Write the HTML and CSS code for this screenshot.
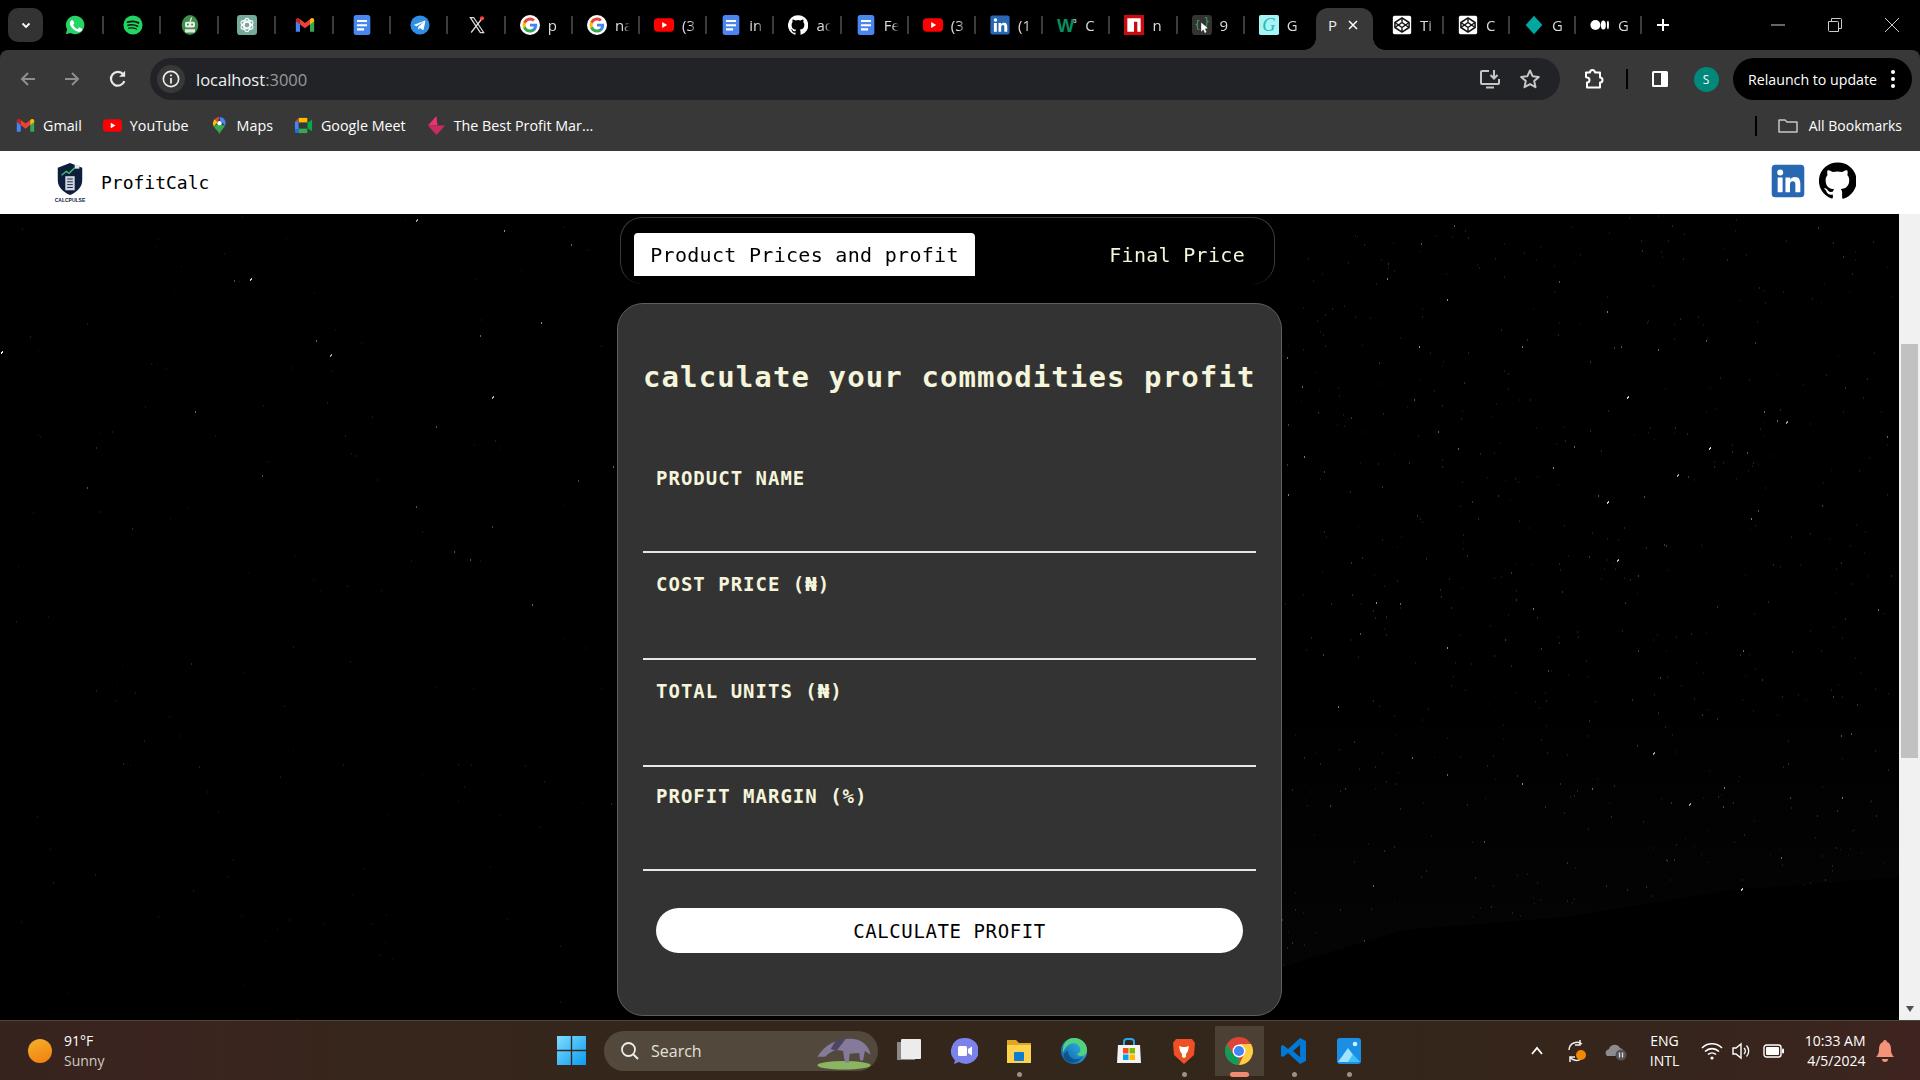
FILE: index.html
```html
<!DOCTYPE html>
<html lang="en">
<head>
    <meta charset="UTF-8">
    <title>ProfitCalc</title>
    <link rel="stylesheet" href="styles.css">
</head>
<body>
<svg class="sprite" width="0" height="0">
    <symbol id="i-whatsapp" viewBox="0 0 24 24"><path fill="#25d366" d="M12 1a11 11 0 0 0-9.500 16.500L1 23l5.700-1.500A11 11 0 1 0 12 1z"/><path fill="#fff" d="M8.300 6.300c-.3 0-.8.100-1.200.6-.5.6-1.300 1.500-1.300 3.200s1.300 3.500 1.500 3.700c.2.300 2.600 4 6.300 5.400 3.100 1.200 3.700 1 4.400.9.700-.1 2.100-.9 2.400-1.700.3-.8.300-1.600.2-1.700-.1-.2-.3-.3-.7-.5l-2.400-1.200c-.3-.1-.6-.2-.8.200l-1.100 1.400c-.2.200-.4.300-.8.100-.4-.2-1.500-.6-2.900-1.800-1.100-1-1.800-2.200-2-2.500-.2-.4 0-.6.200-.8l.6-.7c.2-.2.200-.4.400-.6.100-.3 0-.5 0-.7L9.700 7c-.3-.6-.5-.7-.8-.7z"/></symbol>
    <symbol id="i-spotify" viewBox="0 0 24 24"><circle cx="12" cy="12" r="11.500" fill="#1ed760"/><path fill="none" stroke="#111" stroke-width="2.200" stroke-linecap="round" d="M5.500 8.500c4.500-1.300 9.500-1 13 1"/><path fill="none" stroke="#111" stroke-width="1.900" stroke-linecap="round" d="M6 12.300c4-1 8-.7 11.500 1.200"/><path fill="none" stroke="#111" stroke-width="1.600" stroke-linecap="round" d="M6.800 15.800c3.300-.8 6.500-.5 9.300 1"/></symbol>
    <symbol id="i-bot" viewBox="0 0 24 24"><ellipse cx="12" cy="12" rx="10" ry="12" fill="#3f8f4c"/><rect x="6" y="8" width="12" height="7" rx="2" fill="#e8f0e8"/><circle cx="9.500" cy="11.500" r="1.200" fill="#3f8f4c"/><circle cx="14.500" cy="11.500" r="1.200" fill="#3f8f4c"/><rect x="6" y="17" width="12" height="4" fill="#dfe8df"/><path stroke="#e8f0e8" stroke-width="1.500" d="M12 8l2-5"/></symbol>
    <symbol id="i-gpt" viewBox="0 0 24 24"><rect width="24" height="24" rx="4" fill="#74aa9c"/><g fill="none" stroke="#fff" stroke-width="1.300"><circle cx="12" cy="12" r="3.500"/><ellipse cx="12" cy="12" rx="8" ry="4" transform="rotate(30 12 12)"/><ellipse cx="12" cy="12" rx="8" ry="4" transform="rotate(-30 12 12)"/><ellipse cx="12" cy="12" rx="8" ry="4" transform="rotate(90 12 12)"/></g></symbol>
    <symbol id="i-gmail" viewBox="0 0 24 24"><path fill="#4285f4" d="M1 20V7l5 3.500V20z"/><path fill="#34a853" d="M18 20V10.500L23 7v13z"/><path fill="#ea4335" d="M6 11.500V5l6 4.500L18 5v6.500l-6 4.500z"/><path fill="#c5221f" d="M1 7.500V6c0-2 2.300-3 3.800-1.800L6 5v6.500z"/><path fill="#fbbc04" d="M18 5l1.200-.8C20.700 3 23 4 23 6v1.500l-5 4z"/></symbol>
    <symbol id="i-docs" viewBox="0 0 24 24"><rect x="2" width="20" height="24" rx="3" fill="#4a86f0"/><path fill="#fff" d="M6 6h12v2.500H6zM6 11h12v2.500H6zM6 16h8.500v2.500H6z"/></symbol>
    <symbol id="i-telegram" viewBox="0 0 24 24"><circle cx="12" cy="12" r="11.500" fill="#2f8fe6"/><path fill="#fff" d="M5 11.800l12.500-5c.6-.2 1.100.1.900 1L16.300 17.500c-.1.700-.6.800-1.100.5l-3.200-2.300-1.600 1.500c-.2.200-.4.300-.7.300l.3-3.300 6-5.400c.3-.2 0-.4-.4-.1l-7.400 4.700-3.100-1c-.7-.2-.7-.7-.1-.6z"/></symbol>
    <symbol id="i-x" viewBox="0 0 24 24"><path fill="none" stroke="#ddd" stroke-width="1.500" d="M4 3h4l12 18h-4zM19 3L5 21"/><circle cx="18" cy="4" r="2.500" fill="#f44"/></symbol>
    <symbol id="i-google" viewBox="0 0 24 24"><circle cx="12" cy="12" r="12" fill="#fff"/><path fill="#4285f4" d="M20.600 12.200c0-.6-.1-1.200-.2-1.800H12v3.500h4.800a4.100 4.100 0 0 1-1.800 2.700v2.200h2.900c1.700-1.600 2.700-3.900 2.700-6.600z"/><path fill="#34a853" d="M12 21c2.400 0 4.500-.8 5.900-2.200L15 16.600c-.8.500-1.800.9-3 .9-2.300 0-4.300-1.600-5-3.700H4v2.300A9 9 0 0 0 12 21z"/><path fill="#fbbc04" d="M7 13.800a5.400 5.400 0 0 1 0-3.500V8H4a9 9 0 0 0 0 8.100z"/><path fill="#ea4335" d="M12 6.600c1.300 0 2.500.5 3.400 1.300L18 5.400A9 9 0 0 0 4 8l3 2.300c.7-2.100 2.700-3.700 5-3.700z"/></symbol>
    <symbol id="i-yt" viewBox="0 0 24 24"><rect y="4" width="24" height="16" rx="4.500" fill="#f00"/><path fill="#fff" d="M9.800 8.500v7l6-3.500z"/></symbol>
    <symbol id="i-github" viewBox="0 0 24 24"><path fill="currentColor" d="M12 .3a12 12 0 0 0-3.800 23.400c.6.100.8-.3.800-.6v-2c-3.300.7-4-1.600-4-1.600-.5-1.400-1.300-1.800-1.300-1.800-1-.7.100-.7.100-.7 1.200.1 1.800 1.200 1.800 1.200 1 1.800 2.800 1.300 3.500 1 .1-.8.400-1.300.7-1.600-2.700-.3-5.500-1.300-5.500-6 0-1.200.5-2.300 1.300-3.100-.2-.4-.6-1.600 0-3.200 0 0 1-.3 3.400 1.200a11.500 11.500 0 0 1 6 0c2.300-1.500 3.300-1.200 3.300-1.200.6 1.600.2 2.800 0 3.200.9.800 1.300 1.900 1.300 3.200 0 4.600-2.800 5.600-5.500 5.900.5.400.9 1.200.9 2.300v3.300c0 .3.100.7.800.6A12 12 0 0 0 12 .3"/></symbol>
    <symbol id="i-linkedin" viewBox="0 0 24 24"><rect x=".5" y=".5" width="23" height="23" rx="2.500" fill="#2867b2"/><circle cx="6.500" cy="6" r="2.100" fill="#fff"/><path fill="#fff" d="M4.700 9.500h3.500V20H4.700zM10.200 9.500h3.300V11c.6-1 1.800-1.800 3.400-1.800 3 0 3.800 2 3.800 4.800v6h-3.500v-5.300c0-1.300-.2-2.600-1.800-2.600s-2 1.200-2 2.500V20h-3.200z"/></symbol>
    <symbol id="i-w3" viewBox="0 0 24 24"><text x="0" y="20" font-family="'Liberation Sans',sans-serif" font-weight="700" font-size="22" fill="#04905f">W</text><text x="19.500" y="9" font-family="'Liberation Sans',sans-serif" font-weight="700" font-size="7" fill="#ccc">3</text></symbol>
    <symbol id="i-npm" viewBox="0 0 24 24"><rect width="24" height="24" fill="#cb0a0f"/><path fill="#fff" d="M4 4h16v16h-4V8h-4v12H4z"/></symbol>
    <symbol id="i-dark" viewBox="0 0 24 24"><rect width="24" height="24" rx="4" fill="#333"/><text x="3" y="16" font-family="'DejaVu Sans Mono',monospace" font-size="12" fill="#3fa66b">{</text><text x="14" y="12" font-family="'DejaVu Sans Mono',monospace" font-size="12" fill="#3fa66b">}</text><path fill="#fff" d="M11 9l8 7-3.500.5 2 4-2 1-2-4L11 20z"/></symbol>
    <symbol id="i-gfont" viewBox="0 0 24 24"><rect width="24" height="24" rx="2" fill="#a4f5f3"/><text x="4" y="19" font-family="'Liberation Serif',serif" font-style="italic" font-size="22" fill="#2fb3b5">G</text></symbol>
    <symbol id="i-codepen" viewBox="0 0 24 24"><rect x="1" y="1" width="22" height="22" rx="2" fill="#fff"/><g fill="none" stroke="#111" stroke-width="1.800" stroke-linejoin="round"><path d="M12 3.500l8.500 5.500v6L12 20.500 3.500 15V9z"/><path d="M12 3.500V8M12 16v4.500M3.500 9l8.500 6 8.500-6M3.500 15l8.500-6 8.500 6"/></g></symbol>
    <symbol id="i-diamond" viewBox="0 0 24 24"><path fill="#00a8a0" d="M12 1l10 11-10 11L2 12z"/></symbol>
    <symbol id="i-medium" viewBox="0 0 24 24"><circle cx="6.500" cy="12" r="6" fill="#fff"/><ellipse cx="16" cy="12" rx="3" ry="5.500" fill="#fff"/><ellipse cx="21.500" cy="12" rx="1.200" ry="5" fill="#fff"/></symbol>
</svg>

<div class="tabstrip">
    <button class="tab-menu"><svg viewBox="0 0 12 12" width="12" height="12"><path d="M2.500 4.500L6 8l3.500-3.500" fill="none" stroke="#fff" stroke-width="1.800"/></svg></button>
    <div class="tab pinned"><svg class="fav"><use href="#i-whatsapp"/></svg></div>
    <div class="tab pinned"><svg class="fav"><use href="#i-spotify"/></svg></div>
    <div class="tab pinned"><svg class="fav"><use href="#i-bot"/></svg></div>
    <div class="tab pinned"><svg class="fav"><use href="#i-gpt"/></svg></div>
    <div class="tab pinned"><svg class="fav"><use href="#i-gmail"/></svg></div>
    <div class="tab pinned"><svg class="fav"><use href="#i-docs"/></svg></div>
    <div class="tab pinned"><svg class="fav"><use href="#i-telegram"/></svg></div>
    <div class="tab pinned"><svg class="fav"><use href="#i-x"/></svg></div>
    <div class="tab"><svg class="fav"><use href="#i-google"/></svg><span>p</span></div>
    <div class="tab"><svg class="fav"><use href="#i-google"/></svg><span>na</span></div>
    <div class="tab"><svg class="fav"><use href="#i-yt"/></svg><span>(3</span></div>
    <div class="tab"><svg class="fav"><use href="#i-docs"/></svg><span>in</span></div>
    <div class="tab"><svg class="fav gh"><use href="#i-github"/></svg><span>ac</span></div>
    <div class="tab"><svg class="fav"><use href="#i-docs"/></svg><span>Fe</span></div>
    <div class="tab"><svg class="fav"><use href="#i-yt"/></svg><span>(3</span></div>
    <div class="tab"><svg class="fav"><use href="#i-linkedin"/></svg><span>(1</span></div>
    <div class="tab"><svg class="fav"><use href="#i-w3"/></svg><span>C</span></div>
    <div class="tab"><svg class="fav"><use href="#i-npm"/></svg><span>n</span></div>
    <div class="tab"><svg class="fav"><use href="#i-dark"/></svg><span>9</span></div>
    <div class="tab last"><svg class="fav"><use href="#i-gfont"/></svg><span>G</span></div>
    <div class="tab active"><span>P</span><svg class="tab-close" viewBox="0 0 12 12"><path d="M2 2l8 8M10 2l-8 8" stroke="#fff" stroke-width="1.500"/></svg></div>
    <div class="tab slim"><svg class="fav"><use href="#i-codepen"/></svg><span>Ti</span></div>
    <div class="tab slim"><svg class="fav"><use href="#i-codepen"/></svg><span>C</span></div>
    <div class="tab slim"><svg class="fav"><use href="#i-diamond"/></svg><span>G</span></div>
    <div class="tab slim"><svg class="fav"><use href="#i-medium"/></svg><span>G</span></div>
    <button class="new-tab"><svg viewBox="0 0 16 16" width="16" height="16"><path d="M8 2v12M2 8h12" stroke="#fff" stroke-width="2"/></svg></button>
    <div class="win-controls">
        <button><svg viewBox="0 0 14 14" width="14" height="14"><path d="M0 7h14" stroke="#ccc"/></svg></button>
        <button><svg viewBox="0 0 14 14" width="14" height="14"><path d="M.5 3.500h9a1 1 0 0 1 1 1v9h-9a1 1 0 0 1-1-1zM3.500 3V.5h9a1 1 0 0 1 1 1v9H11" fill="none" stroke="#ccc"/></svg></button>
        <button><svg viewBox="0 0 14 14" width="14" height="14"><path d="M0 0l14 14M14 0L0 14" stroke="#ccc"/></svg></button>
    </div>
</div>

<div class="toolbar">
    <button class="tool"><svg viewBox="0 0 20 20" width="20" height="20"><path d="M17 10H4M10 4l-6 6 6 6" fill="none" stroke="#8e8e8e" stroke-width="2"/></svg></button>
    <button class="tool"><svg viewBox="0 0 20 20" width="20" height="20"><path d="M3 10h13M10 4l6 6-6 6" fill="none" stroke="#8e8e8e" stroke-width="2"/></svg></button>
    <button class="tool reload"><svg viewBox="0 0 20 20" width="22" height="22"><path d="M15.800 12a6.300 6.300 0 1 1-1-6.200" fill="none" stroke="#e8e8e8" stroke-width="2"/><path d="M16.500 2.500v5.500H11z" fill="#e8e8e8"/></svg></button>
    <div class="omnibox">
        <span class="site-info"><svg viewBox="0 0 20 20" width="18" height="18"><circle cx="10" cy="10" r="8.500" fill="none" stroke="#eee" stroke-width="1.800"/><path d="M10 9v6M10 5v2" stroke="#eee" stroke-width="2"/></svg></span>
        <span class="url">localhost<em>:3000</em></span>
        <button class="tool omni-tool first"><svg viewBox="0 0 22 22" width="22" height="22"><path d="M10 3H3a1 1 0 0 0-1 1v11a1 1 0 0 0 1 1h16a1 1 0 0 0 1-1v-4M7 19.500h8" fill="none" stroke="#c4c7c5" stroke-width="2"/><path d="M15 2v8M11.500 7l3.500 3.500L18.500 7" fill="none" stroke="#c4c7c5" stroke-width="2"/></svg></button>
        <button class="tool omni-tool"><svg viewBox="0 0 22 22" width="22" height="22"><path d="M11 2.500l2.600 5.700 6.200.7-4.600 4.200 1.300 6.100L11 16.100l-5.500 3.100 1.300-6.100-4.600-4.200 6.200-.7z" fill="none" stroke="#c4c7c5" stroke-width="2" stroke-linejoin="round"/></svg></button>
    </div>
    <button class="tool ext"><svg viewBox="0 0 22 22" width="22" height="22"><path d="M8 4.500a2.500 2.500 0 0 1 5 0h5v5a2.500 2.500 0 0 1 0 5v5H5v-5a2.500 2.500 0 0 0 0-5 2.500 2.500 0 0 0-1-.5V4.500z" fill="none" stroke="#fff" stroke-width="2" stroke-linejoin="round"/></svg></button>
    <span class="tool-sep"></span>
    <button class="tool side"><svg viewBox="0 0 20 20" width="20" height="20"><rect x="2" y="2" width="16" height="16" rx="1.500" fill="#fff"/><rect x="4" y="4" width="7" height="12" fill="#383838"/></svg></button>
    <span class="avatar">S</span>
    <div class="relaunch">Relaunch to update<svg viewBox="0 0 4 20" width="4" height="20"><circle cx="2" cy="3" r="2" fill="#fff"/><circle cx="2" cy="10" r="2" fill="#fff"/><circle cx="2" cy="17" r="2" fill="#fff"/></svg></div>
</div>

<div class="bookmarks">
    <span class="mark"><svg class="mark-icon"><use href="#i-gmail"/></svg>Gmail</span>
    <span class="mark"><svg class="mark-icon"><use href="#i-yt"/></svg>YouTube</span>
    <span class="mark"><svg class="mark-icon" viewBox="0 0 20 20"><path fill="#ea4335" d="M10 1a6.500 6.500 0 0 0-5 2.300l3 3z"/><path fill="#4285f4" d="M10 1c3.500 0 6.500 2.900 6.500 6.500 0 1-.2 1.800-.6 2.600L11 5.500z"/><path fill="#fbbc04" d="M5 3.300A6.500 6.500 0 0 0 4 11l4-4.500z"/><path fill="#34a853" d="M4 11c1.500 3 5 5 6 8 1-3 4-5 5.900-8.900L8 8.500z"/><circle cx="10" cy="7.500" r="2.300" fill="#fff"/></svg>Maps</span>
    <span class="mark"><svg class="mark-icon" viewBox="0 0 20 20"><path fill="#fbbc04" d="M5 2h9v5H5z"/><path fill="#ea4335" d="M5 2L1 6h4z"/><path fill="#4285f4" d="M1 6h4v8H1z"/><path fill="#1a73e8" d="M1 14h4v4H3a2 2 0 0 1-2-2z"/><path fill="#34a853" d="M5 13h9v5H5z"/><path fill="#00ac47" d="M14 7l5-3v12l-5-3z"/><rect x="5" y="7" width="9" height="6" fill="#383838"/></svg>Google Meet</span>
    <span class="mark"><svg class="mark-icon" viewBox="0 0 20 20"><path fill="#e8356f" d="M10 0L1 10h10z"/><path fill="#c72c5e" d="M1 10l9 10 9-10z"/></svg>The Best Profit Mar...</span>
    <span class="mark-sep"></span>
    <svg class="folder" viewBox="0 0 20 16"><path d="M1 14V2h6l2 2h10v10z" fill="none" stroke="#c4c7c5" stroke-width="1.500" stroke-linejoin="round"/></svg>
    <span class="mark all">All Bookmarks</span>
</div>

<nav class="navbar">
    <div class="brand">
        <div class="logo">
            <svg viewBox="0 0 30 34" width="30" height="32"><path fill="#0f1d3d" d="M15 0l13 5v13c0 8-6 13-13 16C8 31 2 26 2 18V5z"/><path d="M6 13l5-4 3 2 6-6" fill="none" stroke="#37c26b" stroke-width="1.500"/><rect x="20" y="2" width="5" height="4" fill="#dfe6ee"/><rect x="10" y="14" width="10" height="15" fill="#cfd6df"/><path d="M12 17h6M12 20h6M12 23h6M12 26h6" stroke="#0f1d3d"/></svg>
            <span>CALCPULSE</span>
        </div>
        <span class="brand-name">ProfitCalc</span>
    </div>
    <div class="social">
        <svg class="social-in"><use href="#i-linkedin"/></svg>
        <svg class="social-gh"><use href="#i-github"/></svg>
    </div>
</nav>

<div class="viewport">
    <main class="page">
        <canvas id="stars" class="stars" width="1899" height="806"></canvas>
        <div class="mode-tabs">
            <button class="mode current">Product Prices and profit</button>
            <button class="mode">Final Price</button>
        </div>
        <form class="card" onsubmit="return false">
            <h1>calculate your commodities profit</h1>
            <div class="field"><label for="product">PRODUCT NAME</label><input id="product" type="text"></div>
            <div class="field"><label for="cost">COST PRICE (₦)</label><input id="cost" type="text"></div>
            <div class="field"><label for="units">TOTAL UNITS (₦)</label><input id="units" type="text"></div>
            <div class="field"><label for="margin">PROFIT MARGIN (%)</label><input id="margin" type="text"></div>
            <button class="calc">CALCULATE PROFIT</button>
        </form>
    </main>
    <div class="scrollbar">
        <div class="thumb"></div>
        <div class="arrow"></div>
    </div>
</div>

<footer class="taskbar">
    <div class="weather">
        <span class="sun"></span>
        <div class="two-line"><span>91°F</span><span class="dim">Sunny</span></div>
    </div>
    <svg class="win-logo" viewBox="0 0 30 30"><defs><linearGradient id="win" x1="0" y1="0" x2="1" y2="1"><stop offset="0" stop-color="#7fdcff"/><stop offset="1" stop-color="#0b9bf0"/></linearGradient></defs><path fill="url(#win)" d="M0 0h14.300v14.300H0zM15.700 0H30v14.300H15.700zM0 15.700h14.300V30H0zM15.700 15.700H30V30H15.700z"/></svg>
    <div class="search">
        <svg viewBox="0 0 20 20" width="20" height="20"><circle cx="8.500" cy="8.500" r="6.500" fill="none" stroke="#eee" stroke-width="1.800"/><path d="M13.500 13.500L18 18" stroke="#eee" stroke-width="2"/></svg>
        <span>Search</span>
        <svg class="anteater" viewBox="0 0 60 40" width="58" height="38"><ellipse cx="30" cy="35" rx="28" ry="4.500" fill="#8cb562"/><path fill="#857a99" d="M2 26C10 13 22 7 36 7c12 0 20 6 22 17l-6-4-2 10h-3l-1-8-10 1-1 9h-4l-2-12c-6-2-12-1-19 6z"/><path fill="#4b4763" d="M22 8l10-1-10 13-6-2z"/></svg>
    </div>
    <div class="apps">
        <div class="app"><svg viewBox="0 0 28 28" width="28" height="28"><rect x="2" y="5" width="18" height="18" fill="#8a8a8a"/><rect x="6" y="2" width="20" height="20" rx="1" fill="#ececec"/></svg></div>
        <div class="app"><svg viewBox="0 0 28 28" width="28" height="28"><path fill="#7b83eb" d="M14 1a13 13 0 0 0-9 22.300L4 27l5-2a13 13 0 1 0 5-24z"/><rect x="8" y="9" width="9" height="10" rx="1.500" fill="#fff"/><path fill="#fff" d="M18 12l4-2.500v9L18 16z"/></svg></div>
        <div class="app has-run"><svg viewBox="0 0 28 28" width="28" height="28"><path fill="#e0a526" d="M2 3h9l3 3h12v3H2z"/><path fill="#ffd24d" d="M2 8h24v18H2z"/><rect x="9" y="15" width="10" height="9" rx="1" fill="#0f7bd1"/></svg></div>
        <div class="app"><svg viewBox="0 0 28 28" width="28" height="28"><defs><linearGradient id="edge" x1="0" y1="1" x2="1" y2="0"><stop offset="0" stop-color="#0c59a4"/><stop offset="1" stop-color="#35c1f1"/></linearGradient></defs><circle cx="14" cy="14" r="13" fill="url(#edge)"/><path fill="#52d17c" d="M14 1c8 0 13 6 13 12 0 4-3 6-6 6-2 0-4-1-4-2 3-1 4-3 3-6-1-4-6-6-10-4C6 9 4 13 3 16 2 8 6 1 14 1z"/><path fill="#0c3a6e" d="M8 14c0 5 4 9 9 8 2 0 4-1 6-3-3 6-11 9-17 4-3-3-3-8 2-9z" opacity=".6"/></svg></div>
        <div class="app"><svg viewBox="0 0 28 28" width="28" height="28"><path d="M9 8V5a3 3 0 0 1 3-3h4a3 3 0 0 1 3 3v3" fill="none" stroke="#2ba5e8" stroke-width="2"/><path fill="#f3f3f3" d="M3 8h22l1 18H2z"/><rect x="8" y="11" width="5.500" height="5.500" fill="#f25022"/><rect x="14.500" y="11" width="5.500" height="5.500" fill="#7fba00"/><rect x="8" y="17.500" width="5.500" height="5.500" fill="#00a4ef"/><rect x="14.500" y="17.500" width="5.500" height="5.500" fill="#ffb900"/></svg></div>
        <div class="app has-run"><svg viewBox="0 0 28 28" width="28" height="28"><path fill="#f04e23" d="M6 2h16l3 4-1 12-10 9-10-9L3 6z"/><path fill="#fff" d="M9 9l3 1h4l3-1-1 5-2 3v3l-2 1-2-1v-3l-2-3z"/></svg></div>
        <div class="app chrome-app"><svg viewBox="0 0 28 28" width="30" height="30"><circle cx="14" cy="14" r="13" fill="#db4437"/><path fill="#0f9d58" d="M14 27A13 13 0 0 1 2.700 7.500L9 18l5 1z"/><path fill="#ffcd40" d="M14 27A13 13 0 0 0 25.300 7.500H14l5 3-1 8z"/><circle cx="14" cy="14" r="6" fill="#fff"/><circle cx="14" cy="14" r="4.700" fill="#4285f4"/></svg></div>
        <div class="app has-run"><svg viewBox="0 0 28 28" width="28" height="28"><path fill="#0078d4" d="M20 1l6 3v20l-6 3-12-11-5 4-2-1V9l2-1 5 4zM20 8l-7 6 7 6z"/></svg></div>
        <div class="app has-run"><svg viewBox="0 0 28 28" width="28" height="28"><rect x="2" y="1" width="24" height="26" rx="3" fill="#1a8fe3"/><circle cx="20" cy="7" r="2.300" fill="#cfefff"/><path fill="#9fe3ff" d="M3 25l10-14 6 8-5 6z"/><path fill="#3ec1f5" d="M13 25l5-8 7 8z"/></svg></div>
    </div>
    <div class="tray">
        <svg class="tray-icon chevron" viewBox="0 0 14 14" width="14" height="14"><path d="M2 10l5-6 5 6" fill="none" stroke="#fff" stroke-width="1.800"/></svg>
        <svg class="tray-icon sync" viewBox="0 0 24 24" width="24" height="24"><path d="M4 11a8 8 0 0 1 13-6M16 20a8 8 0 0 1-11-2" fill="none" stroke="#eee" stroke-width="1.500"/><path d="M15 1v5h-5M5 23v-5h5" fill="none" stroke="#eee" stroke-width="1.500"/><circle cx="16" cy="16" r="5" fill="#f28a00"/></svg>
        <svg class="tray-icon cloud" viewBox="0 0 24 24" width="24" height="24"><path fill="#8c8c8c" d="M3 17a4 4 0 0 1 2-7 6 6 0 0 1 11-1 5 5 0 0 1 3 8z"/><circle cx="17" cy="16" r="5.500" fill="#555"/><path d="M15.500 13.500v5M18.500 13.500v5" stroke="#ddd" stroke-width="1.300"/></svg>
        <div class="two-line lang"><span>ENG</span><span>INTL</span></div>
        <svg class="tray-icon wifi" viewBox="0 0 22 18" width="22" height="18"><path d="M1 6a14 14 0 0 1 20 0M4 9.500a10 10 0 0 1 14 0M7 12.500a6 6 0 0 1 8 0" fill="none" stroke="#fff" stroke-width="1.600"/><circle cx="11" cy="16" r="1.600" fill="#fff"/></svg>
        <svg class="tray-icon vol" viewBox="0 0 22 18" width="22" height="18"><path d="M2 6h3l5-4v14l-5-4H2z" fill="none" stroke="#fff" stroke-width="1.400"/><path d="M13 6a4 4 0 0 1 0 6M15.500 3.500a8 8 0 0 1 0 11" fill="none" stroke="#fff" stroke-width="1.300"/></svg>
        <svg class="tray-icon batt" viewBox="0 0 22 14" width="22" height="14"><rect x="1" y="1" width="17" height="12" rx="2.500" fill="none" stroke="#fff" stroke-width="1.400"/><rect x="3" y="3" width="13" height="8" rx="1" fill="#fff"/><rect x="19" y="4.500" width="2" height="5" rx="1" fill="#fff"/></svg>
        <div class="two-line clock"><span>10:33 AM</span><span>4/5/2024</span></div>
        <svg class="tray-icon bell" viewBox="0 0 20 24" width="20" height="24"><path fill="#f2937a" d="M10 1a2 2 0 0 1 2 2c3 1 4 4 4 7 0 4 1 6 3 8H1c2-2 3-4 3-8 0-3 1-6 4-7a2 2 0 0 1 2-2z"/><path fill="#f2937a" d="M7 20h6a3 3 0 0 1-6 0z"/></svg>
    </div>
</footer>
<script src="stars.js"></script>
</body>
</html>
```

FILE: styles.css
```css
html, body {
    margin: 0;
    height: 100%;
}

body {
    display: flex;
    flex-direction: column;
    height: 100vh;
    overflow: hidden;
    background: #000;
    font-family: "Open Sans", "Noto Sans", sans-serif;
    color: #fff;
}

button {
    border: none;
    background: none;
    padding: 0;
    color: inherit;
    font: inherit;
}

svg {
    display: block;
}

.sprite {
    position: absolute;
}

/* tab strip */
.tabstrip {
    display: flex;
    flex: 0 0 50px;
    height: 50px;
    padding-left: 8px;
    box-sizing: border-box;
    background: #000;
    font-size: 15px;
}

.tab-menu {
    display: flex;
    align-items: center;
    justify-content: center;
    width: 35px;
    height: 34px;
    margin: 8px 3.6px 0 0;
    border-radius: 10px;
    background: #333;
}

.tab {
    position: relative;
    display: flex;
    align-items: center;
    width: 67.2px;
    height: 42px;
    margin-top: 4px;
    padding-left: 14px;
    box-sizing: border-box;
    flex: none;
    color: #ddd;
}

.tab::after {
    content: "";
    position: absolute;
    right: 0;
    top: 12px;
    width: 2px;
    height: 18px;
    background: #3c3c3c;
}

.tab.pinned {
    width: 57.4px;
    padding-left: 0;
    justify-content: center;
}

.tab.slim {
    width: 66px;
}

.tab.last::after {
    display: none;
}

.fav {
    flex: none;
    width: 20px;
    height: 20px;
}

.fav.gh {
    color: #fff;
}

.tab span {
    width: 15px;
    margin-left: 8px;
    overflow: hidden;
    white-space: nowrap;
    mask-image: linear-gradient(90deg, #000 55%, transparent);
}

.tab.active {
    width: 57px;
    height: 42px;
    margin: 8px 5px 0 4px;
    padding: 0 0 8px 12px;
    background: #383838;
    border-radius: 12px 12px 0 0;
    color: #eee;
}

.tab.active::before,
.tab.active::after {
    content: "";
    display: block;
    position: absolute;
    top: auto;
    bottom: 0;
    width: 12px;
    height: 12px;
}

.tab.active::before {
    left: -12px;
    background: radial-gradient(circle at 0 0, transparent 11.5px, #383838 12px);
}

.tab.active::after {
    right: -12px;
    background: radial-gradient(circle at 100% 0, transparent 11.5px, #383838 12px);
}

.tab.active span {
    width: 19px;
    margin-left: 0;
    mask-image: none;
}

.tab-close {
    width: 12px;
    height: 12px;
    flex: none;
}

.new-tab {
    display: flex;
    align-items: center;
    justify-content: center;
    width: 42px;
    height: 50px;
}

.win-controls {
    display: flex;
    margin-left: auto;
}

.win-controls button {
    display: flex;
    align-items: center;
    justify-content: center;
    width: 57px;
    height: 50px;
}

/* toolbar */
.toolbar {
    display: flex;
    align-items: center;
    flex: 0 0 50px;
    height: 50px;
    padding: 8px 0 0 6px;
    box-sizing: border-box;
    background: #383838;
    border-radius: 8px 8px 0 0;
}

.tool {
    display: flex;
    align-items: center;
    justify-content: center;
    flex: none;
    width: 44px;
    height: 42px;
}

.tool.reload {
    margin-left: 2px;
}

.omnibox {
    display: flex;
    align-items: center;
    width: 1410px;
    height: 42px;
    margin-left: 10px;
    padding: 0 10px 0 7px;
    box-sizing: border-box;
    background: #212327;
    border-radius: 21px;
}

.site-info {
    display: flex;
    align-items: center;
    justify-content: center;
    width: 28px;
    height: 28px;
    border-radius: 50%;
    background: #383838;
}

.url {
    margin-left: 11px;
    font-size: 16.5px;
    color: #f0f0f0;
}

.url em {
    font-style: normal;
    color: #9a9a9a;
}

.omni-tool {
    width: 40px;
}

.omni-tool.first {
    margin-left: auto;
}

.ext {
    width: 40px;
    margin-left: 13px;
}

.tool-sep {
    flex: none;
    width: 2px;
    height: 20px;
    margin-left: 13px;
    background: #000;
}

.side {
    width: 40px;
    margin-left: 12px;
}

.avatar {
    display: flex;
    align-items: center;
    justify-content: center;
    flex: none;
    width: 25px;
    height: 25px;
    margin-left: 13.5px;
    border-radius: 50%;
    background: #00897b;
    font-size: 12px;
}

.relaunch {
    display: flex;
    align-items: center;
    justify-content: space-between;
    width: 179px;
    height: 42px;
    margin-left: 14.5px;
    padding: 0 17px 0 15px;
    box-sizing: border-box;
    border-radius: 21px;
    background: #000;
    font-size: 14.2px;
    white-space: nowrap;
}

/* bookmarks */
.bookmarks {
    display: flex;
    align-items: center;
    gap: 21px;
    flex: 0 0 51px;
    height: 51px;
    padding: 0 18px 0 16px;
    box-sizing: border-box;
    background: #383838;
    font-size: 14.3px;
}

.mark {
    display: flex;
    align-items: center;
    gap: 8px;
    white-space: nowrap;
}

.mark-icon {
    width: 19px;
    height: 19px;
}

.mark-sep {
    width: 2px;
    height: 20px;
    margin-left: auto;
    background: #000;
}

.folder {
    width: 20px;
    height: 16px;
}

.mark.all {
    margin-left: -10px;
    font-size: 14px;
}

/* app navbar */
.navbar {
    display: flex;
    align-items: center;
    justify-content: space-between;
    flex: 0 0 63px;
    height: 63px;
    padding: 0 64px 0 55px;
    box-sizing: border-box;
    background: #fff;
    color: #000;
}

.brand {
    display: flex;
    align-items: center;
    gap: 16px;
}

.logo {
    display: flex;
    flex-direction: column;
    align-items: center;
    width: 30px;
}

.logo span {
    font-family: "Liberation Sans", sans-serif;
    font-size: 5px;
    font-weight: 700;
    color: #0f1d3d;
    white-space: nowrap;
    margin-top: 2px;
}

.brand-name {
    font-family: "DejaVu Sans Mono", monospace;
    font-size: 18px;
    padding-bottom: 1px;
}

.social {
    display: flex;
    align-items: center;
    gap: 14px;
    padding-bottom: 4px;
}

.social-in {
    width: 34px;
    height: 34px;
}

.social-gh {
    width: 37px;
    height: 37px;
    color: #000;
}

/* page */
.viewport {
    display: flex;
    flex: 1;
    min-height: 0;
}

.page {
    position: relative;
    display: flex;
    flex-direction: column;
    align-items: center;
    flex: 1;
    overflow: hidden;
    font-family: "DejaVu Sans Mono", monospace;
}

.stars {
    position: absolute;
    left: 0;
    top: 0;
}

.mode-tabs {
    position: relative;
    display: flex;
    align-items: flex-start;
    justify-content: space-between;
    width: 655px;
    height: 67px;
    margin: 3px 4px 0 0;
    padding: 15px 29px 0 13px;
    box-sizing: border-box;
    border: 1px solid #3a3a3a;
    border-bottom: none;
    border-radius: 22px;
}

.mode {
    height: 43px;
    font-size: 20px;
    letter-spacing: .3px;
    color: #f5f5dc;
}

.mode.current {
    width: 341px;
    background: #fff;
    color: #000;
    border-radius: 4px 4px 0 0;
}

.card {
    position: relative;
    display: flex;
    flex-direction: column;
    width: 665px;
    height: 713px;
    margin-top: 19px;
    padding: 53px 25px 0;
    box-sizing: border-box;
    background: #333;
    border: 1px solid #5e5e5e;
    border-radius: 26px;
    color: #f5f5dc;
}

.card h1 {
    margin: 0 0 49px;
    font-size: 29px;
    letter-spacing: 1.1px;
    line-height: 40px;
    white-space: nowrap;
}

.field {
    display: flex;
    flex-direction: column;
    height: 107px;
    box-sizing: border-box;
    padding-top: 19px;
    border-bottom: 2px solid #e6e6e6;
}

.field:first-of-type {
    padding-top: 20px;
}

.field:nth-of-type(4) {
    height: 104px;
    padding-top: 17px;
}

.field label {
    padding-left: 13px;
    font-size: 19px;
    font-weight: 700;
    letter-spacing: 1px;
    line-height: 24px;
}

.field input {
    flex: 1;
    min-height: 0;
    border: none;
    outline: none;
    background: transparent;
    color: #f5f5dc;
}

.calc {
    height: 45px;
    margin: 37px 13px 0;
    border-radius: 23px;
    background: #fff;
    color: #000;
    font-size: 19px;
    letter-spacing: .6px;
}

.scrollbar {
    display: flex;
    flex-direction: column;
    align-items: center;
    flex: 0 0 21px;
    padding-top: 130px;
    box-sizing: border-box;
    background: #f1f1f1;
}

.thumb {
    width: 17px;
    height: 414px;
    background: #c1c1c1;
}

.arrow {
    margin: auto 0 8px;
    border: 4.5px solid transparent;
    border-top: 6px solid #505050;
    border-bottom: none;
}

/* windows taskbar */
.taskbar {
    display: flex;
    align-items: center;
    flex: 0 0 60px;
    height: 60px;
    box-sizing: border-box;
    border-top: 1px solid #4d4439;
    background: linear-gradient(90deg, #36231d 0, #3b2420 8%, #36261b 20%, #33261a 60%, #36251c 88%, #3e2420 100%);
    font-size: 14.5px;
}

.weather {
    display: flex;
    align-items: center;
    gap: 12px;
    width: 557px;
    padding-left: 28px;
    box-sizing: border-box;
}

.sun {
    width: 24px;
    height: 24px;
    border-radius: 50%;
    background: linear-gradient(160deg, #f2b32a, #f47c10);
}

.two-line {
    display: flex;
    flex-direction: column;
    line-height: 20px;
    font-size: 14px;
}

.dim {
    color: #cfcac4;
}

.win-logo {
    flex: none;
    width: 29px;
    height: 29px;
}

.search {
    display: flex;
    align-items: center;
    gap: 11px;
    width: 274px;
    height: 40px;
    margin-left: 18px;
    padding: 0 5px 0 16px;
    box-sizing: border-box;
    border-radius: 20px;
    background: #52493c;
    font-size: 16px;
    color: #e4e0da;
}

.anteater {
    margin-left: auto;
}

.apps {
    display: flex;
    margin-left: 3.5px;
}

.app {
    position: relative;
    display: flex;
    align-items: center;
    justify-content: center;
    width: 55px;
    height: 59px;
}

.app.has-run::after,
.chrome-app::after {
    content: "";
    position: absolute;
    bottom: 3px;
    left: 25px;
    width: 5px;
    height: 5px;
    border-radius: 50%;
    background: #9a9288;
}

.chrome-app {
    background: linear-gradient(#4a4034, #4a4034) center / 49px 50px no-repeat;
}

.chrome-app::after {
    left: 18px;
    width: 19px;
    height: 5px;
    border-radius: 3px;
    background: #f08a75;
}

.tray {
    display: flex;
    align-items: center;
    flex: 1;
    padding-left: 153px;
    box-sizing: border-box;
}

.tray-icon {
    flex: none;
}

.sync {
    margin-left: 21px;
}

.cloud {
    margin-left: 15px;
}

.lang {
    align-items: center;
    width: 40px;
    margin-left: 17px;
}

.wifi {
    margin-left: 16px;
}

.vol {
    margin-left: 8px;
}

.batt {
    margin-left: 10px;
}

.clock {
    align-items: flex-end;
    width: 68px;
    margin-left: 13px;
}

.bell {
    margin-left: 9px;
}
```

FILE: stars.js
```js
// bright stars picked by hand, faint ones come from a seeded random
const bright = [
    [416,5,.8],[504,16,.7],[250,64,1],[234,66,.4],[571,30,.5],[541,108,.7],[1,137,1.4],[316,126,.5],[330,140,.8],
    [480,121,.5],[492,182,.9],[195,197,.5],[436,212,.4],[613,252,.5],[262,261,.4],[87,273,.4],[416,292,.4],
    [492,312,.3],[454,337,.4],[470,345,.4],[532,390,.5],[578,266,.3],[96,233,.2],[132,314,.2],
    [1627,182,1],[1709,233,1],[1607,287,1],[1677,260,.8],[1617,345,.9],[1786,207,.8],[1777,206,.5],[1764,197,.5],
    [1553,253,.7],[1419,132,.7],[1447,85,.7],[1387,64,.6],[1522,132,.6],[1607,97,.6],[1658,135,.5],[1621,132,.4],
    [1706,126,.4],[1559,67,.4],[1751,304,.6],[1758,296,.4],[1644,282,.4],[1598,281,.4],[1574,232,.5],[1747,238,.4],
    [1887,222,.5],[1438,217,.5],[1458,234,.5],[1414,185,.4],[1304,242,.6],[1288,280,.6],[1302,172,.5],[1287,143,.5],
    [1376,388,.7],[1400,389,.5],[1533,394,.6],[1878,395,.5],[1454,11,.4],[1421,29,.4],[1666,331,.3],[1638,361,.3],
    [1741,674,1],[1653,538,.8],[1689,589,.8],[1724,573,.6],[1522,569,.7],[1447,433,.7],[1338,492,.6],[1842,583,.6],
    [1743,436,.5],[1373,671,.5],[1447,560,.5],[1781,643,.5],[1412,543,.5],[1484,627,.4],[1592,574,.5],[1723,592,.4],
    [1841,521,.4],[1851,519,.4],[1833,482,.3],[1360,419,.4],[1323,440,.3],[1638,436,.3],[1660,463,.3],[1330,591,.3],
    [1364,726,.3]
];

// the planet edge at the bottom right, page coordinates
const rim = [[1000,800],[1282,753],[1402,716],[1566,703],[1729,676],[1899,663]];

const cv = document.getElementById("stars");
const ctx = cv.getContext("2d");

let seed = 4711;
function rnd() {
    seed = (seed * 16807) % 2147483647;
    return seed / 2147483647;
}

function edge(x) {
    for (let i = 1; i < rim.length; i++) {
        if (x <= rim[i][0]) {
            const t = (x - rim[i-1][0]) / (rim[i][0] - rim[i-1][0]);
            return rim[i-1][1] + t * (rim[i][1] - rim[i-1][1]);
        }
    }
    return 806;
}

// faint haze above the edge
ctx.beginPath();
ctx.moveTo(rim[0][0], rim[0][1]);
rim.forEach(p => ctx.lineTo(p[0], p[1]));
ctx.lineTo(1899, 480);
ctx.lineTo(1000, 480);
ctx.closePath();
const haze = ctx.createLinearGradient(0, 480, 0, 780);
haze.addColorStop(0, "rgba(255,255,255,0)");
haze.addColorStop(1, "rgba(255,255,255,.02)");
ctx.fillStyle = haze;
ctx.fill();

function star(x, y, a) {
    ctx.fillStyle = "rgba(235,240,255," + Math.min(a, 1) + ")";
    if (a > .6) {
        // the big ones look slanted in the reference
        ctx.fillRect(x + 1, y, 1, 1);
        ctx.fillRect(x, y + 1, 2, 1);
        ctx.fillRect(x, y + 2, 1, 1);
    } else {
        ctx.fillRect(x, y, 1, 2);
    }
}

for (let i = 0; i < 650; i++) {
    const x = Math.floor(1282 + rnd() * 610);
    const y = Math.floor(rnd() * 806);
    const a = .06 + rnd() * rnd() * .22;
    if (y < edge(x)) star(x, y, a);
}
for (let i = 0; i < 130; i++) {
    star(Math.floor(rnd() * 620), Math.floor(rnd() * 806), .05 + rnd() * rnd() * .12);
}
bright.forEach(s => star(s[0], s[1], s[2] * .85));
```
